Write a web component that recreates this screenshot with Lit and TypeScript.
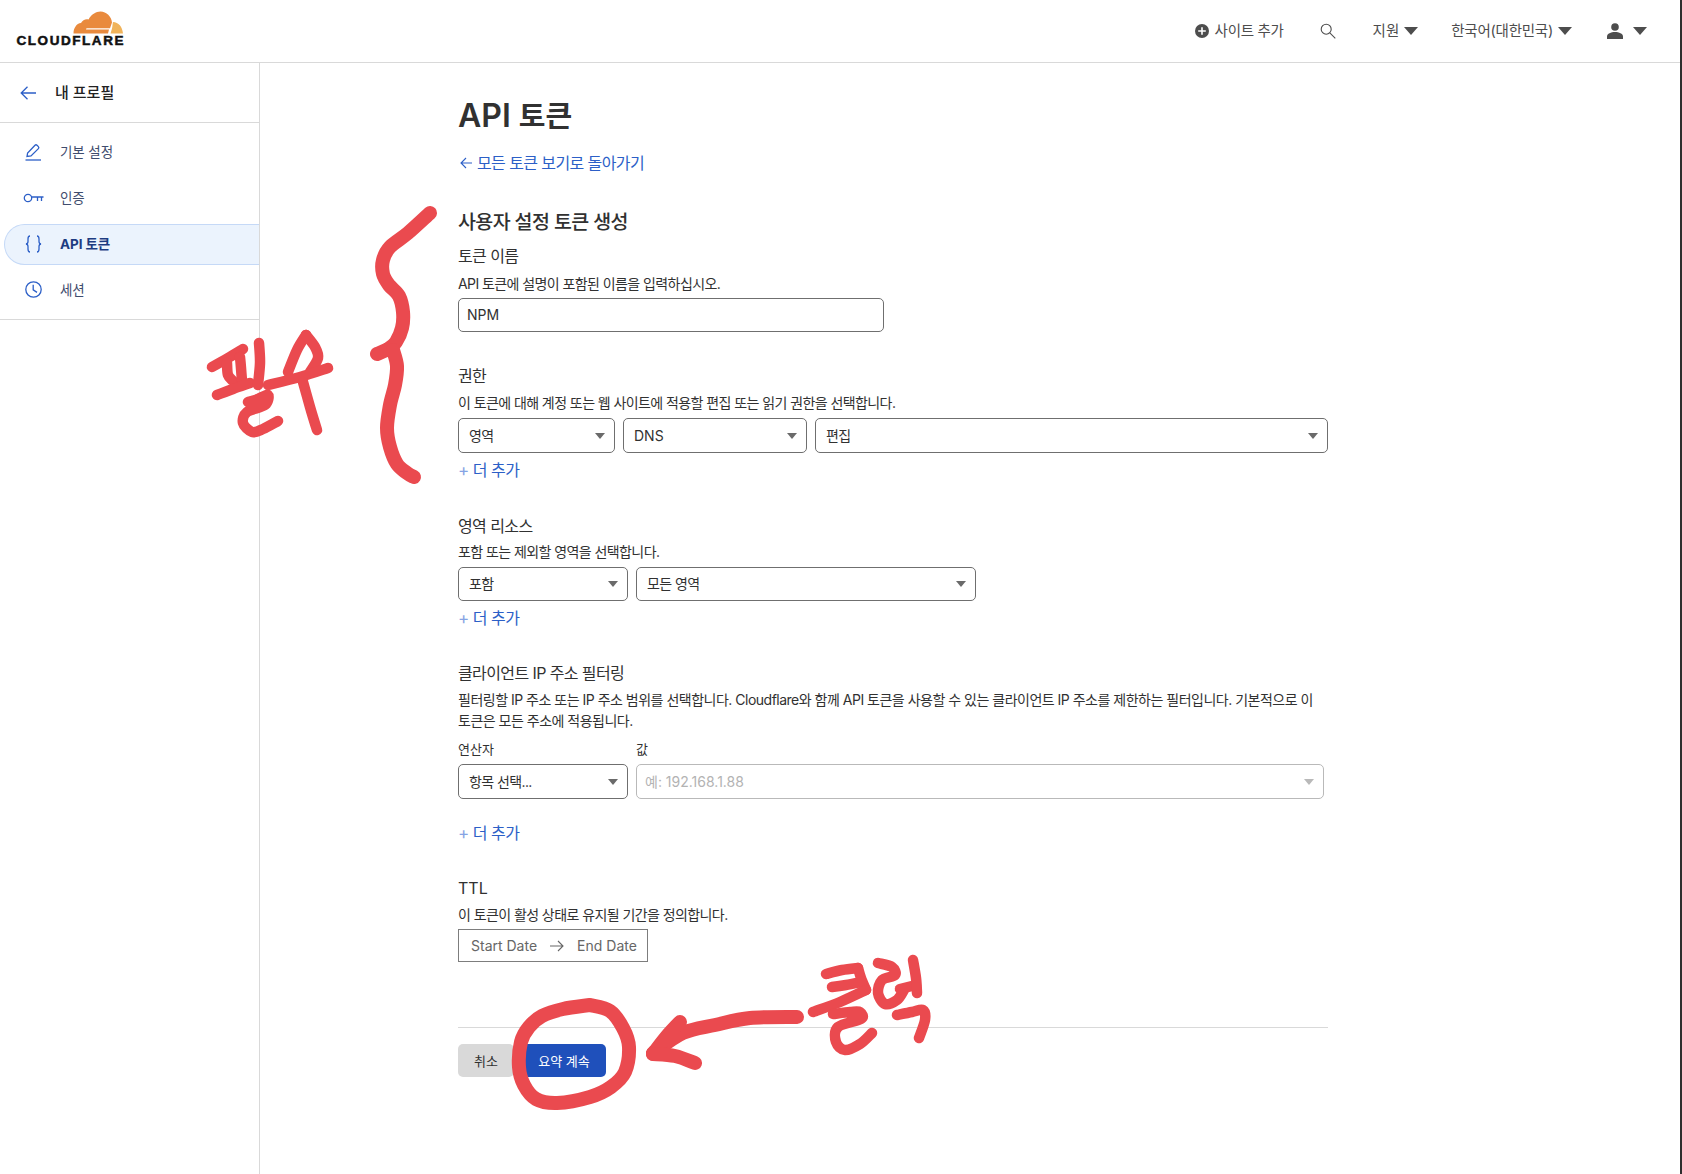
import { LitElement, html, css, svg } from "lit";
import { customElement } from "lit/decorators.js";

type P = [number, number];
// Smooth a freehand ink stroke through its sampled points (Catmull-Rom to Bezier).
function ink(pts: P[]): string {
  const n = pts.length;
  const at = (i: number): P => pts[Math.max(0, Math.min(n - 1, i))];
  let d = `M${pts[0][0]} ${pts[0][1]}`;
  for (let i = 0; i < n - 1; i++) {
    const [p0, p1, p2, p3] = [at(i - 1), at(i), at(i + 1), at(i + 2)];
    const c1 = [p1[0] + (p2[0] - p0[0]) / 6, p1[1] + (p2[1] - p0[1]) / 6];
    const c2 = [p2[0] - (p3[0] - p1[0]) / 6, p2[1] - (p3[1] - p1[1]) / 6];
    d += `C${c1[0].toFixed(1)} ${c1[1].toFixed(1)} ${c2[0].toFixed(1)} ${c2[1].toFixed(1)} ${p2[0]} ${p2[1]}`;
  }
  return d;
}

const thick: P[][] = [
  [[430, 213], [408, 233], [390, 247], [383, 260], [383, 274], [389, 285], [399, 296], [403, 312], [402, 328], [396, 342], [388, 349], [377, 354]],
  [[393, 350], [397, 366], [395, 385], [390, 405], [387, 428], [390, 447], [397, 464], [407, 473], [414, 477]],
  [[590, 1005], [610, 1011], [623, 1028], [629, 1047], [625, 1072], [611, 1087], [590, 1097], [557, 1103], [536, 1099], [524, 1085], [519, 1067], [521, 1042], [529, 1027], [542, 1016], [563, 1009], [590, 1005]],
  [[797, 1017], [750, 1018], [715, 1025], [683, 1033], [653, 1053]],
  [[680, 1022], [667, 1036], [653, 1054]],
  [[653, 1054], [675, 1056], [695, 1063]],
];
const thin: P[][] = [
  [[212, 367], [228, 358], [243, 349]],
  [[227, 363], [228, 375], [233, 381]],
  [[240, 357], [241, 368], [242, 381]],
  [[217, 395], [233, 389], [250, 383]],
  [[259, 343], [260, 363], [258, 385]],
  [[248, 402], [258, 399], [268, 395], [265, 405], [247, 412], [243, 423], [252, 432], [263, 429], [278, 421]],
  [[288, 372], [297, 350], [306, 335]],
  [[306, 335], [315, 347], [318, 358], [310, 372]],
  [[268, 385], [300, 377], [328, 368]],
  [[303, 382], [310, 407], [317, 430]],
  [[826, 974], [842, 970], [858, 968]],
  [[858, 968], [861, 978], [866, 990]],
  [[832, 987], [846, 985], [862, 982]],
  [[866, 990], [840, 1002], [813, 1012]],
  [[833, 1014], [850, 1012], [860, 1012], [861, 1019], [838, 1027], [836, 1042], [845, 1050], [860, 1044], [872, 1033]],
  [[878, 963], [892, 967], [895, 975], [882, 980], [878, 993], [885, 1004], [897, 1000], [904, 990]],
  [[900, 989], [916, 985]],
  [[913, 960], [916, 978], [917, 993]],
  [[897, 1015], [912, 1012], [923, 1010], [925, 1020], [919, 1038]],
];

@customElement("app-root")
export class AppRoot extends LitElement {
  static styles = css`
    :host {
      display: block;
      position: relative;
      height: 1174px;
      overflow: hidden;
      background: #fff;
      color: #313131;
      font-family: Inter, "Noto Sans CJK KR", sans-serif;
      font-size: 14px;
      line-height: 20px;
    }
    header {
      height: 62px;
      border-bottom: 1px solid #d9d9d9;
      display: flex;
      align-items: center;
      justify-content: space-between;
      padding: 0 35px 0 17px;
      color: #4d4d4d;
    }
    .logo { display: inline-flex; flex-direction: column; align-items: flex-end; width: 107px; margin-top: -5px; }
    .logo svg { display: block; margin-right: 1px; }
    .wordmark {
      font-family: "Liberation Sans", Arial, sans-serif;
      font-weight: 700;
      font-size: 13.5px;
      line-height: 13px;
      letter-spacing: 1.55px;
      color: #111;
      -webkit-text-stroke: 0.5px #111;
      white-space: nowrap;
      margin-right: -1px;
    }
    .tools { display: flex; align-items: center; font-size: 14.5px; margin-top: -1px; }
    .tool { display: inline-flex; align-items: center; }
    .caret { display: block; }
    .t-add { gap: 6px; margin-right: 36px; letter-spacing: -0.3px; }
    .t-search { margin-right: 37px; }
    .t-help { gap: 5px; margin-right: 33px; }
    .t-lang { gap: 5px; margin-right: 35px; letter-spacing: -0.25px; }
    .t-user { gap: 10px; }

    .body { display: flex; height: 1111px; }
    aside { width: 259px; flex: none; border-right: 1px solid #d9d9d9; }
    .side-head {
      height: 59px;
      border-bottom: 1px solid #d9d9d9;
      display: flex;
      align-items: center;
      padding-left: 20px;
      gap: 19px;
      font-size: 15px;
      font-weight: 500;
      color: #222;
    }
    .side-head svg { color: #2c5fc7; display: block; }
    nav { padding: 6px 0 6px 4px; border-bottom: 1px solid #d9d9d9; }
    .item {
      height: 46px;
      display: flex;
      align-items: center;
      padding: 0 0 1px 16px;
      color: #3f4d6e;
      font-size: 13.5px;
      letter-spacing: -0.1px;
      box-sizing: border-box;
    }
    .item .ic { width: 26px; height: 24px; margin-right: 14px; color: #2c5fc7; display: flex; align-items: center; justify-content: center; }
    .item.active {
      height: 41px;
      margin: 3px 0 2px;
      background: #ebf3fd;
      border: 1px solid #c5d9f7;
      border-right: none;
      border-radius: 21px 0 0 21px;
      padding-left: 15px;
      font-weight: 700;
      color: #1d3c82;
    }

    main { width: 870px; margin-left: 198px; padding-top: 33px; }
    h1 { margin: 0; font-size: 32px; line-height: 40px; font-weight: 600; color: #313131; }
    h1 span { font-size: 29px; }
    a { color: #2c5fc7; text-decoration: none; font-size: 16px; line-height: 24px; display: flex; align-items: center; letter-spacing: -0.6px; }
    .back { margin-top: 14px; gap: 5px; }
    .back svg { margin-left: 2px; }
    h2 { margin: 32px 0 0; font-size: 19.5px; line-height: 30px; font-weight: 500; color: #313131; letter-spacing: -0.6px; }
    .label { font-size: 16px; line-height: 24px; color: #313131; letter-spacing: -0.6px; }
    .lat { letter-spacing: 0; }
    .hint { font-size: 14px; line-height: 20px; color: #313131; letter-spacing: -0.58px; }
    .section { margin-top: 32px; }
    .section.first { margin-top: 7px; }
    .section.tight { margin-top: 31px; }
    .mt4 { margin-top: 4px; }
    .mt5 { margin-top: 5px; }
    .mt6 { margin-top: 6px; }
    .long { line-height: 21px; margin-top: 4px; width: 870px; letter-spacing: -0.5px; }
    .input {
      width: 426px;
      height: 34px;
      box-sizing: border-box;
      border: 1px solid #6f6f6f;
      border-radius: 5px;
      padding-left: 8px;
      display: flex;
      align-items: center;
      font-size: 14px;
    }
    .row { display: flex; gap: 8px; margin-top: 5px; }
    .sel {
      height: 35px;
      box-sizing: border-box;
      border: 1px solid #6f6f6f;
      border-radius: 5px;
      padding: 0 9px 0 10px;
      display: flex;
      align-items: center;
      justify-content: space-between;
      font-size: 14px;
      color: #313131;
      flex: none;
      letter-spacing: -0.6px;
    }
    .sel.h34 { height: 34px; }
    .tri { width: 0; height: 0; border-left: 5px solid transparent; border-right: 5px solid transparent; border-top: 6px solid #6a6a6a; }
    .w157 { width: 157px; }
    .w184 { width: 184px; }
    .w513 { width: 513px; }
    .w170 { width: 170px; }
    .w340 { width: 340px; }
    .w688 { width: 688px; }
    .sel.off { border-color: #b9b9b9; color: #b3b3b3; padding-left: 8px; }
    .sel.off .tri { border-top-color: #b9b9b9; }
    .add { margin-top: 5px; gap: 4px; letter-spacing: -0.5px; }
    .add span:first-child { color: #86a3e4; font-size: 17px; }
    .add.far { margin-top: 22px; }
    .cols { display: flex; gap: 8px; margin-top: 8px; font-size: 13px; line-height: 20px; }
    .cols div:first-child { width: 170px; }
    .date {
      margin-top: 4px;
      width: 190px;
      height: 33px;
      box-sizing: border-box;
      border: 1px solid #7d7d7d;
      display: flex;
      align-items: center;
      padding-left: 12px;
      gap: 13px;
      color: #666;
      font-size: 14px;
    }
    hr { border: none; border-top: 1px solid #d9d9d9; margin: 65px 0 0; }
    .actions { display: flex; gap: 8px; margin-top: 16px; }
    .btn {
      height: 33px;
      border-radius: 5px;
      display: flex;
      align-items: center;
      justify-content: center;
      font-size: 13px;
    }
    .cancel { width: 56px; background: #d9d9d9; color: #313131; }
    .next { width: 84px; background: #1f50bb; color: #fff; }
    .ink { position: absolute; left: 0; top: 0; pointer-events: none; }
    .edge { position: absolute; top: 0; bottom: 0; right: 0; width: 2px; background: #2e2e2e; }
  `;

  private sel(cls: string, text: string, latin = false) {
    return html`<div class="sel ${cls}"><span class=${latin ? "lat" : ""}>${text}</span><span class="tri"></span></div>`;
  }

  private addMore(far = false) {
    return html`<a class="add ${far ? "far" : ""}"><span>+</span><span>더 추가</span></a>`;
  }

  private caret() {
    return html`<svg class="caret" width="14" height="8" viewBox="0 0 14 8"><path d="M0 0h14L7 8z" fill="#4d4d4d"/></svg>`;
  }

  render() {
    return html`
      <header>
        <div class="logo">
          <svg width="50" height="23" viewBox="0 0 50 23">
            <path d="M0.500 22.500C0.500 17 3.500 12.500 8 12C9.500 9 13 7.500 15.500 8.500C18 3.500 23 .5 27.500 .5C33.500 .5 38.500 5.500 39 11.500L37 17.200H13.500L13 18.600H36L35 22.500Z" fill="#e98a3d"/>
            <path d="M40 11C45.500 11 49.500 16 50 22.500H37.500L39 17.500C39.500 15.500 39.500 13 40 11Z" fill="#f0b35a"/>
          </svg>
          <div class="wordmark">CLOUDFLARE</div>
        </div>
        <div class="tools">
          <span class="tool t-add">
            <svg width="14" height="14" viewBox="0 0 14 14"><circle cx="7" cy="7" r="7" fill="#4d4d4d"/><path d="M7 3.200v7.600M3.200 7h7.600" stroke="#fff" stroke-width="1.600"/></svg>
            사이트 추가
          </span>
          <span class="tool t-search">
            <svg width="16" height="16" viewBox="0 0 16 16" fill="none" stroke="#4d4d4d" stroke-width="1.100"><circle cx="6.200" cy="6.200" r="5"/><path d="M9.800 9.800 15.300 15.300"/></svg>
          </span>
          <span class="tool t-help">지원 ${this.caret()}</span>
          <span class="tool t-lang">한국어(대한민국) ${this.caret()}</span>
          <span class="tool t-user">
            <svg width="16" height="16" viewBox="0 0 16 16" fill="#4d4d4d"><circle cx="8" cy="4" r="3.800"/><path d="M0 16v-2.500C0 10.500 4 9 8 9s8 1.500 8 4.500V16z"/></svg>
            ${this.caret()}
          </span>
        </div>
      </header>
      <div class="body">
        <aside>
          <div class="side-head">
            <svg width="16" height="14" viewBox="0 0 16 14" fill="none" stroke="currentColor" stroke-width="1.300"><path d="M16 7H1.200M7.500 .8 1.200 7l6.300 6.200"/></svg>
            내 프로필
          </div>
          <nav>
            <div class="item">
              <span class="ic"><svg width="18" height="18" viewBox="0 0 18 18" fill="none" stroke="currentColor" stroke-width="1.300"><path d="M3 13.500 3.600 10 11 2.200c.6-.6 1.400-.6 2 0l1.400 1.400c.6.6.5 1.400 0 2L7 13z"/><path d="M1.500 17h15.500"/></svg></span>
              기본 설정
            </div>
            <div class="item">
              <span class="ic"><svg width="21" height="10" viewBox="0 0 21 10" fill="none" stroke="currentColor" stroke-width="1.300"><circle cx="5" cy="5" r="3.700"/><path d="M8.700 4H20.500M14.500 4v4M18.500 4v4"/></svg></span>
              인증
            </div>
            <div class="item active">
              <span class="ic"><svg width="17" height="18" viewBox="0 0 17 18" fill="none" stroke="currentColor" stroke-width="1.300"><path d="M5 1C3 1 3 2.200 3 4v2.500C3 8 2.500 8.800 1 9c1.500.2 2 1 2 2.500V14c0 1.800 0 3 2 3M12 1c2 0 2 1.200 2 3v2.500c0 1.500.5 2.300 2 2.500-1.500.2-2 1-2 2.500V14c0 1.800 0 3-2 3"/></svg></span>
              API 토큰
            </div>
            <div class="item">
              <span class="ic"><svg width="17" height="17" viewBox="0 0 17 17" fill="none" stroke="currentColor" stroke-width="1.300"><circle cx="8.500" cy="8.500" r="7.700"/><path d="M8.200 3.800v5l3.800 2.600"/></svg></span>
              세션
            </div>
          </nav>
        </aside>
        <main>
          <h1>API <span>토큰</span></h1>
          <a class="back">
            <svg width="12" height="12" viewBox="0 0 12 12" fill="none" stroke="currentColor" stroke-width="1.100"><path d="M12 6H1M6 1 1 6l5 5"/></svg>
            모든 토큰 보기로 돌아가기
          </a>
          <h2>사용자 설정 토큰 생성</h2>
          <section class="section first">
            <div class="label">토큰 이름</div>
            <div class="hint mt6">API 토큰에 설명이 포함된 이름을 입력하십시오.</div>
            <div class="input mt4">NPM</div>
          </section>
          <section class="section">
            <div class="label">권한</div>
            <div class="hint mt5">이 토큰에 대해 계정 또는 웹 사이트에 적용할 편집 또는 읽기 권한을 선택합니다.</div>
            <div class="row">
              ${this.sel("w157", "영역")}${this.sel("w184", "DNS", true)}${this.sel("w513", "편집")}
            </div>
            ${this.addMore()}
          </section>
          <section class="section">
            <div class="label">영역 리소스</div>
            <div class="hint mt4">포함 또는 제외할 영역을 선택합니다.</div>
            <div class="row">
              ${this.sel("w170 h34", "포함")}${this.sel("w340 h34", "모든 영역")}
            </div>
            ${this.addMore()}
          </section>
          <section class="section tight">
            <div class="label">클라이언트 IP 주소 필터링</div>
            <div class="hint long">필터링할 IP 주소 또는 IP 주소 범위를 선택합니다. Cloudflare와 함께 API 토큰을 사용할 수 있는 클라이언트 IP 주소를 제한하는 필터입니다. 기본적으로 이 토큰은 모든 주소에 적용됩니다.</div>
            <div class="cols"><div>연산자</div><div>값</div></div>
            <div class="row">
              ${this.sel("w170", "항목 선택...")}${this.sel("w688 off", "예: 192.168.1.88", true)}
            </div>
            ${this.addMore(true)}
          </section>
          <section class="section tight">
            <div class="label lat">TTL</div>
            <div class="hint mt5">이 토큰이 활성 상태로 유지될 기간을 정의합니다.</div>
            <div class="date">
              <span>Start Date</span>
              <svg width="14" height="12" viewBox="0 0 14 12" fill="none" stroke="#666" stroke-width="1.100"><path d="M0 6h13M8 1l5 5-5 5"/></svg>
              <span>End Date</span>
            </div>
          </section>
          <hr />
          <div class="actions">
            <div class="btn cancel">취소</div>
            <div class="btn next">요약 계속</div>
          </div>
        </main>
      </div>
      <svg class="ink" width="1682" height="1174" viewBox="0 0 1682 1174" fill="none" stroke="#ea4a4f" stroke-linecap="round" stroke-linejoin="round">
        ${thick.map((p) => svg`<path d=${ink(p)} stroke-width="14"/>`)}
        ${thin.map((p) => svg`<path d=${ink(p)} stroke-width="10.500"/>`)}
      </svg>
      <div class="edge"></div>
    `;
  }
}
